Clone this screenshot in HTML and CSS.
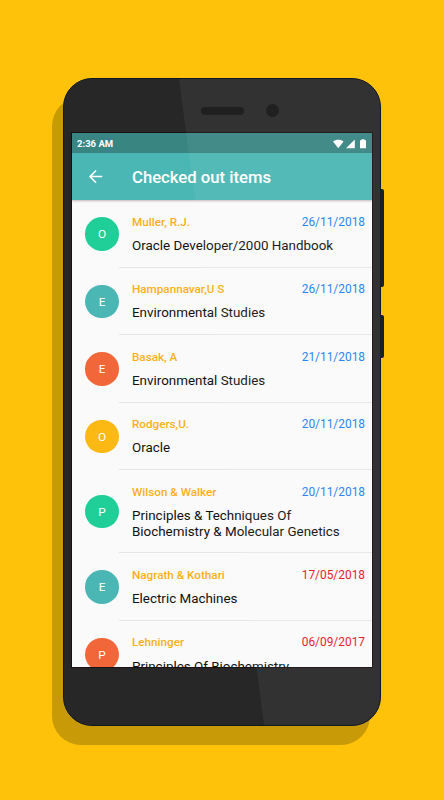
FILE: index.html
```
<!DOCTYPE html>
<html lang="en">
<head>
  <meta charset="UTF-8">
  <meta name="viewport" content="width=device-width, initial-scale=1.0">
  <title>Checked out items</title>
  <link rel="stylesheet" href="styles.css">
</head>
<body>
  <div class="phone">
    <div class="side-button volume"></div>
    <div class="side-button power"></div>
    <div class="phone-top">
      <div class="speaker"></div>
      <div class="camera"></div>
    </div>
    <div class="screen">
      <div class="status-bar">
        <span class="time">2:36 AM</span>
        <svg class="status-icons" width="34" height="10" viewBox="0 0 34 10" fill="#fff">
          <path d="M0 2.5 C3 0 7.6 0 10.6 2.5 L5.3 9.2 Z"/>
          <path d="M13 9.2 L21.8 9.2 L21.8 0.4 Z"/>
          <path d="M27 1.2 H28.5 V0.2 H31.5 V1.2 H33 V9.3 H27 Z"/>
        </svg>
      </div>
      <div class="app-bar">
        <svg class="back" width="14" height="14" viewBox="0 0 14 14" fill="none" stroke="#fff" stroke-width="1.5">
          <path d="M13.2 6.6 H1.3 M7.1 0.5 L1 6.6 L7.1 12.7"/>
        </svg>
        <h1>Checked out items</h1>
      </div>
      <div class="list">
        <div class="item">
          <div class="avatar green">O</div>
          <div class="details">
            <div class="item-head"><span class="author">Muller, R.J.</span><span class="date">26/11/2018</span></div>
            <div class="title">Oracle Developer/2000 Handbook</div>
          </div>
        </div>
        <div class="item">
          <div class="avatar teal">E</div>
          <div class="details">
            <div class="item-head"><span class="author">Hampannavar,U S</span><span class="date">26/11/2018</span></div>
            <div class="title">Environmental Studies</div>
          </div>
        </div>
        <div class="item">
          <div class="avatar orange">E</div>
          <div class="details">
            <div class="item-head"><span class="author">Basak, A</span><span class="date">21/11/2018</span></div>
            <div class="title">Environmental Studies</div>
          </div>
        </div>
        <div class="item">
          <div class="avatar yellow">O</div>
          <div class="details">
            <div class="item-head"><span class="author">Rodgers,U.</span><span class="date">20/11/2018</span></div>
            <div class="title">Oracle</div>
          </div>
        </div>
        <div class="item">
          <div class="avatar green">P</div>
          <div class="details">
            <div class="item-head"><span class="author">Wilson &amp; Walker</span><span class="date">20/11/2018</span></div>
            <div class="title">Principles &amp; Techniques Of<br>Biochemistry &amp; Molecular Genetics</div>
          </div>
        </div>
        <div class="item">
          <div class="avatar teal">E</div>
          <div class="details">
            <div class="item-head"><span class="author">Nagrath &amp; Kothari</span><span class="date overdue">17/05/2018</span></div>
            <div class="title">Electric Machines</div>
          </div>
        </div>
        <div class="item">
          <div class="avatar orange">P</div>
          <div class="details">
            <div class="item-head"><span class="author">Lehninger</span><span class="date overdue">06/09/2017</span></div>
            <div class="title">Principles Of Biochemistry</div>
          </div>
        </div>
      </div>
    </div>
    <div class="shine"></div>
  </div>
</body>
</html>
```
FILE: styles.css
```
body {
  margin: 0;
  height: 800px;
  overflow: hidden;
  background-color: #ffc20a;
  font-family: Roboto, "Liberation Sans", sans-serif;
}

.phone {
  position: relative;
  box-sizing: border-box;
  width: 318px;
  height: 648px;
  margin: 78px 0 0 63px;
  border: 1px solid #101828;
  border-radius: 29px;
  background-color: #272727;
  box-shadow: -11px 19px 0 #c99a07;
}

.phone-top {
  box-sizing: border-box;
  display: flex;
  align-items: center;
  height: 54px;
  padding: 9px 0 0 137px;
}

.speaker {
  width: 43px;
  height: 8px;
  border-radius: 4px;
  background-color: #151515;
}

.camera {
  width: 13px;
  height: 13px;
  margin-left: 22px;
  border-radius: 50%;
  background-color: #151515;
}

/* light reflection across the right part of the phone */
.shine {
  position: absolute;
  inset: 0;
  border-radius: 28px;
  background-color: rgba(255, 255, 255, 0.05);
  clip-path: polygon(115px 0, 100% 0, 100% 100%, 200px 100%);
}

.side-button {
  position: absolute;
  left: 316px;
  width: 3.5px;
  border-radius: 0 2px 2px 0;
  background-color: #18202a;
}

.volume {
  top: 110px;
  height: 98px;
}

.power {
  top: 236px;
  height: 43px;
}

.screen {
  width: 300px;
  height: 534px;
  margin-left: 8px;
  overflow: hidden;
  background-color: #fafafa;
  outline: 1px solid #1b1011;
}

.status-bar {
  display: flex;
  justify-content: space-between;
  align-items: center;
  box-sizing: border-box;
  height: 20px;
  padding: 1px 5px 0 5px;
  background-color: #388582;
}

.time {
  color: #ffffff;
  font-size: 9.5px;
  font-weight: bold;
  line-height: 20px;
}

.app-bar {
  position: relative;
  display: flex;
  align-items: center;
  box-sizing: border-box;
  height: 47px;
  padding: 1px 0 0 17px;
  background-color: #4bb7b5;
  box-shadow: 0 1px 2px rgba(60, 20, 20, 0.3);
}

.app-bar h1 {
  margin: 2px 0 0 29px;
  color: #ffffff;
  font-size: 16.7px;
  font-weight: 500;
  line-height: 20px;
}

.item {
  display: flex;
  align-items: center;
}

.avatar {
  width: 33.5px;
  height: 33.5px;
  margin-left: 13.3px;
  border-radius: 50%;
  color: #ffffff;
  font-size: 11.8px;
  line-height: 34.5px;
  text-align: center;
}

.green {
  background-color: #20ce98;
}

.teal {
  background-color: #4bb7b5;
}

.orange {
  background-color: #f1673a;
}

.yellow {
  background-color: #fcb813;
}

.details {
  flex: 1;
  box-sizing: border-box;
  min-height: 67.5px;
  padding: 13.6px 7px 12.4px 13.2px;
  border-bottom: 1px solid #e6e6e6;
}

.item-head {
  display: flex;
  justify-content: space-between;
  line-height: 16px;
}

.author {
  color: #fcb017;
  font-size: 11.7px;
  font-weight: 500;
}

.date {
  color: #1f80f3;
  font-size: 11.9px;
}

.overdue {
  color: #e5131b;
}

.title {
  margin-top: 8.4px;
  color: #111111;
  font-size: 13.4px;
  line-height: 16px;
  white-space: nowrap;
}
```
